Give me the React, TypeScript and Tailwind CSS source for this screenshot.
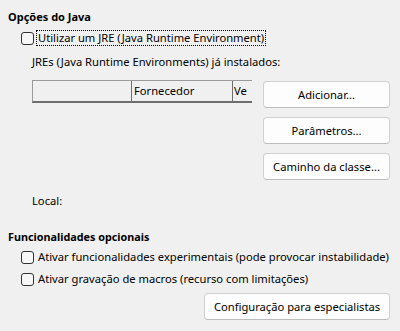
import type { ReactNode } from 'react';

function Box() {
  return <span className="h-[13px] w-[13px] shrink-0 rounded-[3px] border border-[#333] bg-[#f7f7f7]" />;
}

function Check({ label, focused }: { label: string; focused?: boolean }) {
  return (
    <div className="flex h-[16px] items-center pl-[21px]">
      <Box />
      <span
        className={`ml-[2px] flex h-[16px] items-center whitespace-nowrap px-[1px] leading-none ${
          focused ? 'border border-dotted border-black' : 'border border-transparent'
        }`}
      >
        {label}
      </span>
    </div>
  );
}

function Btn({ children, className = '' }: { children: ReactNode; className?: string }) {
  return (
    <button
      className={`flex h-[27px] items-center justify-center whitespace-nowrap rounded-[4px] border border-[#d0d0d0] border-b-[#bcbcbc] bg-[#fdfdfd] text-[11.2px] text-black ${className}`}
    >
      {children}
    </button>
  );
}

export default function App() {
  return (
    <div className="relative flex h-[331px] w-[400px] flex-col overflow-hidden bg-[#f0f0f0] font-['Noto_Sans','Open_Sans',sans-serif] text-[11.2px] leading-[16px] text-black">
      {/* Java */}
      <div className="mt-[9px] whitespace-nowrap pl-[8px] text-[11px] font-bold">Opções do Java</div>
      <div className="mt-[5px]">
        <Check label="Utilizar um JRE (Java Runtime Environment)" focused />
      </div>
      <div className="mt-[8px] whitespace-nowrap pl-[32px]">JREs (Java Runtime Environments) já instalados:</div>

      <div className="mt-[10px] flex pl-[32px]">
        <div className="w-[220px]">
          <div className="flex h-[23px] border-l border-t border-[#9a9a9a] border-b-2 border-b-[#6e6e6e]">
            <div className="w-[99px] border-r border-[#6e6e6e]" />
            <div className="flex w-[101px] items-center border-r border-[#6e6e6e] pl-[2px]">Fornecedor</div>
            <div className="flex flex-1 items-center overflow-hidden pl-[1px]">Ve</div>
          </div>
        </div>
        <div className="ml-[11px] mt-[1px] flex w-[127px] flex-col gap-[9px]">
          <Btn>Adicionar...</Btn>
          <Btn>Parâmetros...</Btn>
          <Btn>Caminho da classe...</Btn>
        </div>
      </div>

      <div className="mt-[13px] pl-[32px]">Local:</div>

      {/* Opcionais */}
      <div className="mt-[20px] whitespace-nowrap pl-[8px] text-[10.8px] font-bold">Funcionalidades opcionais</div>
      <div className="mt-[4px] flex flex-col gap-[6px]">
        <Check label="Ativar funcionalidades experimentais (pode provocar instabilidade)" />
        <Check label="Ativar gravação de macros (recurso com limitações)" />
      </div>
      <div className="mt-[6px] flex justify-end pr-[10px]">
        <Btn className="w-[186px]">Configuração para especialistas</Btn>
      </div>
    </div>
  );
}
